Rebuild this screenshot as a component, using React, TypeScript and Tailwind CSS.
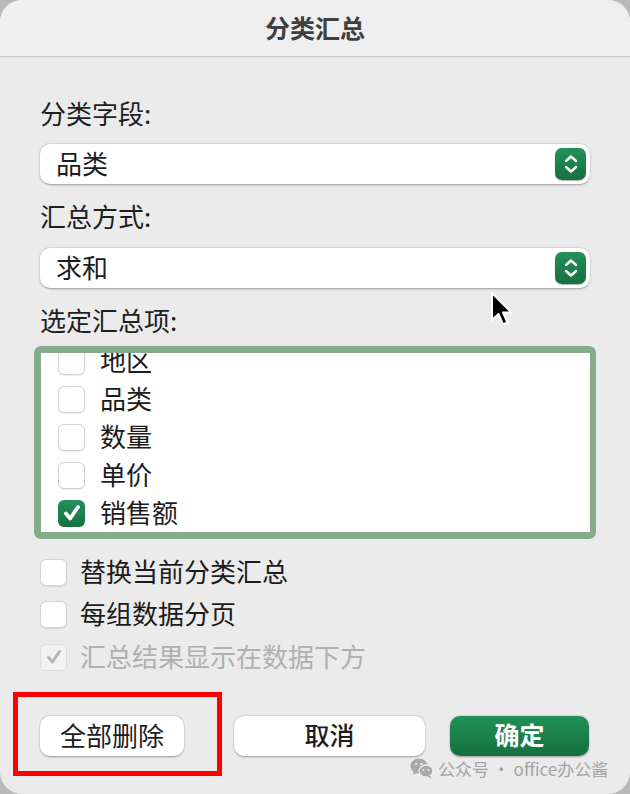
import React from "react";

const FONT = { fontFamily: '"Noto Sans CJK SC", "Noto Sans", sans-serif' };

function Stepper() {
  return (
    <div className="w-[31px] h-[32px] rounded-[7px] bg-gradient-to-b from-[#23915a] to-[#16703f] flex items-center justify-center shadow-[0_0.5px_1px_rgba(0,0,0,0.3)]">
      <svg width="16" height="22" viewBox="0 0 16 22" fill="none" stroke="white" strokeWidth="2.4" strokeLinecap="round" strokeLinejoin="round">
        <path d="M3 8 L8 3.5 L13 8" />
        <path d="M3 14 L8 18.5 L13 14" />
      </svg>
    </div>
  );
}

function Select({ value }: { value: string }) {
  return (
    <div className="h-[40px] rounded-[10px] bg-white shadow-[0_0.5px_2px_rgba(0,0,0,0.35)] flex items-center justify-between pl-[16px] pr-[4px]">
      <span className="text-[26px] leading-none text-[#1c1c1c] -mt-[3px]">{value}</span>
      <Stepper />
    </div>
  );
}

function Box({ checked, disabled }: { checked?: boolean; disabled?: boolean }) {
  if (checked && !disabled) {
    return (
      <div className="w-[27px] h-[27px] shrink-0 rounded-[6px] bg-gradient-to-b from-[#22915a] to-[#177241] flex items-center justify-center">
        <svg width="22" height="22" viewBox="0 0 20 20" fill="none" stroke="white" strokeWidth="3.4" strokeLinecap="round" strokeLinejoin="round">
          <path d="M4.5 10.5 L8.3 15 L15.5 4.5" />
        </svg>
      </div>
    );
  }
  if (checked && disabled) {
    return (
      <div className="w-[27px] h-[27px] shrink-0 rounded-[6px] bg-[#f2f2f2] border border-[#dcdcdc] flex items-center justify-center">
        <svg width="20" height="20" viewBox="0 0 20 20" fill="none" stroke="#b4b4b4" strokeWidth="3" strokeLinecap="round" strokeLinejoin="round">
          <path d="M4.5 10.5 L8.3 15 L15.5 4.5" />
        </svg>
      </div>
    );
  }
  return (
    <div className="w-[27px] h-[27px] shrink-0 rounded-[6px] bg-white border border-[#d2d2d2] shadow-[0_0.5px_1px_rgba(0,0,0,0.08)]" />
  );
}

export default function App() {
  const items = [
    { label: "地区", checked: false },
    { label: "品类", checked: false },
    { label: "数量", checked: false },
    { label: "单价", checked: false },
    { label: "销售额", checked: true },
  ];
  return (
    <div className="relative w-[630px] h-[794px] bg-[#b9b9b9]" style={FONT}>
      <div className="w-full h-full rounded-[22px] bg-[#ebebeb] overflow-hidden flex flex-col">
        <div className="h-[57px] shrink-0 bg-[#efefef] border-b border-[#cacaca] flex items-center justify-center">
          <span className="text-[25px] font-bold text-[#3f3f3f] leading-none -mt-[2px]">分类汇总</span>
        </div>
        <div className="px-[40px] flex flex-col">
          <div className="mt-[39px] h-[34px] flex items-center text-[26px] leading-none text-[#1f1f1f]">分类字段:</div>
          <div className="mt-[14px]">
            <Select value="品类" />
          </div>
          <div className="mt-[15px] h-[34px] flex items-center text-[26px] leading-none text-[#1f1f1f]">汇总方式:</div>
          <div className="mt-[15px]">
            <Select value="求和" />
          </div>
          <div className="mt-[15px] h-[34px] flex items-center text-[26px] leading-none text-[#1f1f1f]">选定汇总项:</div>
          <div className="mt-[9px] -mx-[6px] h-[193px] rounded-[7px] bg-[#86aa8c] p-[7px] pr-[6px]">
            <div className="h-full bg-white overflow-hidden">
              <div className="-mt-[11px] flex flex-col">
                {items.map((it) => (
                  <div key={it.label} className="h-[38px] flex items-center pl-[17px] gap-[15px]">
                    <Box checked={it.checked} />
                    <span className="text-[26px] leading-none text-[#1c1c1c] -mt-[3px]">{it.label}</span>
                  </div>
                ))}
              </div>
            </div>
          </div>
          <div className="mt-[12px] flex flex-col">
            <div className="h-[42px] flex items-center gap-[13px]">
              <Box />
              <span className="text-[26px] leading-none text-[#1c1c1c] -mt-[3px]">替换当前分类汇总</span>
            </div>
            <div className="h-[42px] flex items-center gap-[13px]">
              <Box />
              <span className="text-[26px] leading-none text-[#1c1c1c] -mt-[3px]">每组数据分页</span>
            </div>
            <div className="h-[44px] flex items-center gap-[13px]">
              <Box checked disabled />
              <span className="text-[26px] leading-none text-[#b0b0b0] -mt-[3px]">汇总结果显示在数据下方</span>
            </div>
          </div>
          <div className="mt-[37px] flex items-center">
            <div className="w-[144px] h-[40px] rounded-[10px] bg-white shadow-[0_0.5px_2px_rgba(0,0,0,0.35)] flex items-center justify-center text-[26px] leading-none text-[#1c1c1c]">
              <span className="-mt-[3px]">全部删除</span>
            </div>
            <div className="ml-[50px] w-[191px] h-[40px] rounded-[10px] bg-white shadow-[0_0.5px_2px_rgba(0,0,0,0.35)] flex items-center justify-center text-[25px] leading-none font-medium text-[#1c1c1c]">
              <span className="-mt-[3px]">取消</span>
            </div>
            <div className="ml-[25px] w-[139px] h-[40px] rounded-[10px] bg-gradient-to-b from-[#21915a] to-[#15703e] shadow-[0_0.5px_2px_rgba(0,0,0,0.35)] flex items-center justify-center text-[25px] leading-none font-bold text-white">
              <span className="-mt-[3px]">确定</span>
            </div>
          </div>
        </div>
      </div>

      {/* red annotation frame */}
      <div className="absolute left-[13px] top-[692px] w-[209px] h-[84px] border-[5px] border-[#ff0000]" />

      {/* mouse cursor */}
      <svg className="absolute left-[490px] top-[291px]" width="26" height="38" viewBox="0 0 26 38">
        <path d="M2 2 L2 29 L8.5 23 L13 33.5 L17.5 31.5 L13 21.5 L21.5 21.5 Z" fill="black" stroke="white" strokeWidth="2" strokeLinejoin="round" />
      </svg>

      {/* watermark */}
      <div className="absolute left-[410px] top-[757px] flex items-center gap-[4px] text-[17px] text-[#a3a3a3] leading-none">
        <svg width="24" height="22" viewBox="0 0 24 22">
          <ellipse cx="9" cy="9" rx="8.5" ry="7.5" fill="#a8a8a8" />
          <path d="M4 14 L3 18 L7.5 15.5 Z" fill="#a8a8a8" />
          <ellipse cx="16" cy="14" rx="7" ry="6" fill="#a8a8a8" stroke="#ebebeb" strokeWidth="1.4" />
          <path d="M20 18.5 L21.5 21.5 L17 19.5 Z" fill="#a8a8a8" />
          <circle cx="6" cy="7" r="1.2" fill="#ebebeb" />
          <circle cx="11.5" cy="7" r="1.2" fill="#ebebeb" />
          <circle cx="13.5" cy="13" r="1" fill="#ebebeb" />
          <circle cx="18.5" cy="13" r="1" fill="#ebebeb" />
        </svg>
        <span>公众号 · office办公酱</span>
      </div>
    </div>
  );
}
